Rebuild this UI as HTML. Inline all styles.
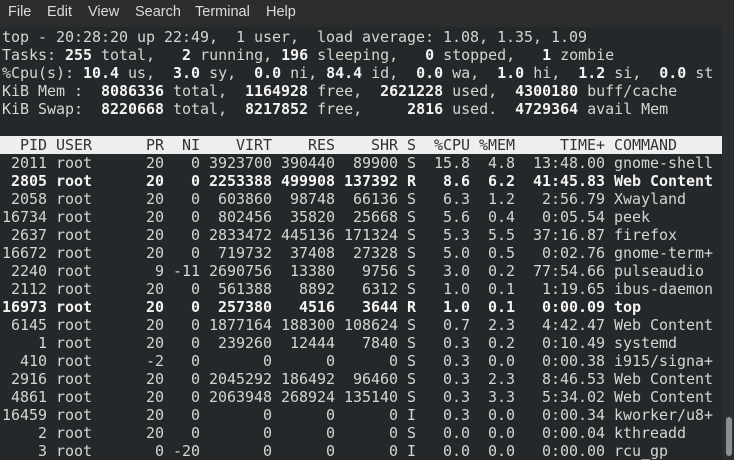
<!DOCTYPE html>
<html><head><meta charset="utf-8"><style>
html,body{margin:0;padding:0;}
body{width:734px;height:460px;overflow:hidden;background:#24282a;position:relative;}
.menu{position:absolute;left:0;top:0;width:734px;height:27px;background:#2d2d2d;font-family:"Liberation Sans","DejaVu Sans",sans-serif;font-size:14.5px;color:#dcdcdc;}
.menu span{position:absolute;top:4px;}
pre{position:absolute;left:2px;top:28px;margin:0;font-family:"DejaVu Sans Mono","Liberation Mono",monospace;font-size:15px;line-height:18px;color:#d3d7cf;letter-spacing:-0.03px;}
b{color:#f3f3f1;font-weight:bold;}
.hdr{position:absolute;left:0;top:136px;width:722px;height:18px;background:#eeeeec;}
.hdrt{color:#2e3436;}
.sb{position:absolute;left:722px;top:27px;width:12px;height:433px;background:#2a2e30;}
.thumb{position:absolute;left:726px;top:417px;width:6px;height:39px;border-radius:3px;background:#8c8e8f;}
</style></head><body>
<div class="menu"><span style="left:8px">File</span><span style="left:47px">Edit</span><span style="left:88px">View</span><span style="left:135px">Search</span><span style="left:195px">Terminal</span><span style="left:266px">Help</span></div>
<div class="hdr"></div>
<div class="sb"></div><div class="thumb"></div>
<pre>top - 20:28:20 up 22:49,  1 user,  load average: 1.08, 1.35, 1.09
Tasks: <b>255</b> total,   <b>2</b> running, <b>196</b> sleeping,   <b>0</b> stopped,   <b>1</b> zombie
%Cpu(s): <b>10.4</b> us,  <b>3.0</b> sy,  <b>0.0</b> ni, <b>84.4</b> id,  <b>0.0</b> wa,  <b>1.0</b> hi,  <b>1.2</b> si,  <b>0.0</b> st
KiB Mem :  <b>8086336</b> total,  <b>1164928</b> free,  <b>2621228</b> used,  <b>4300180</b> buff/cache
KiB Swap:  <b>8220668</b> total,  <b>8217852</b> free,     <b>2816</b> used.  <b>4729364</b> avail Mem

<span class="hdrt">  PID USER      PR  NI    VIRT    RES    SHR S  %CPU %MEM     TIME+ COMMAND</span>
 2011 root      20   0 3923700 390440  89900 S  15.8  4.8  13:48.00 gnome-shell
<b> 2805 root      20   0 2253388 499908 137392 R   8.6  6.2  41:45.83 Web Content</b>
 2058 root      20   0  603860  98748  66136 S   6.3  1.2   2:56.79 Xwayland
16734 root      20   0  802456  35820  25668 S   5.6  0.4   0:05.54 peek
 2637 root      20   0 2833472 445136 171324 S   5.3  5.5  37:16.87 firefox
16672 root      20   0  719732  37408  27328 S   5.0  0.5   0:02.76 gnome-term+
 2240 root       9 -11 2690756  13380   9756 S   3.0  0.2  77:54.66 pulseaudio
 2112 root      20   0  561388   8892   6312 S   1.0  0.1   1:19.65 ibus-daemon
<b>16973 root      20   0  257380   4516   3644 R   1.0  0.1   0:00.09 top</b>
 6145 root      20   0 1877164 188300 108624 S   0.7  2.3   4:42.47 Web Content
    1 root      20   0  239260  12444   7840 S   0.3  0.2   0:10.49 systemd
  410 root      -2   0       0      0      0 S   0.3  0.0   0:00.38 i915/signa+
 2916 root      20   0 2045292 186492  96460 S   0.3  2.3   8:46.53 Web Content
 4861 root      20   0 2063948 268924 135140 S   0.3  3.3   5:34.02 Web Content
16459 root      20   0       0      0      0 I   0.3  0.0   0:00.34 kworker/u8+
    2 root      20   0       0      0      0 S   0.0  0.0   0:00.04 kthreadd
    3 root       0 -20       0      0      0 I   0.0  0.0   0:00.00 rcu_gp</pre>
</body></html>
